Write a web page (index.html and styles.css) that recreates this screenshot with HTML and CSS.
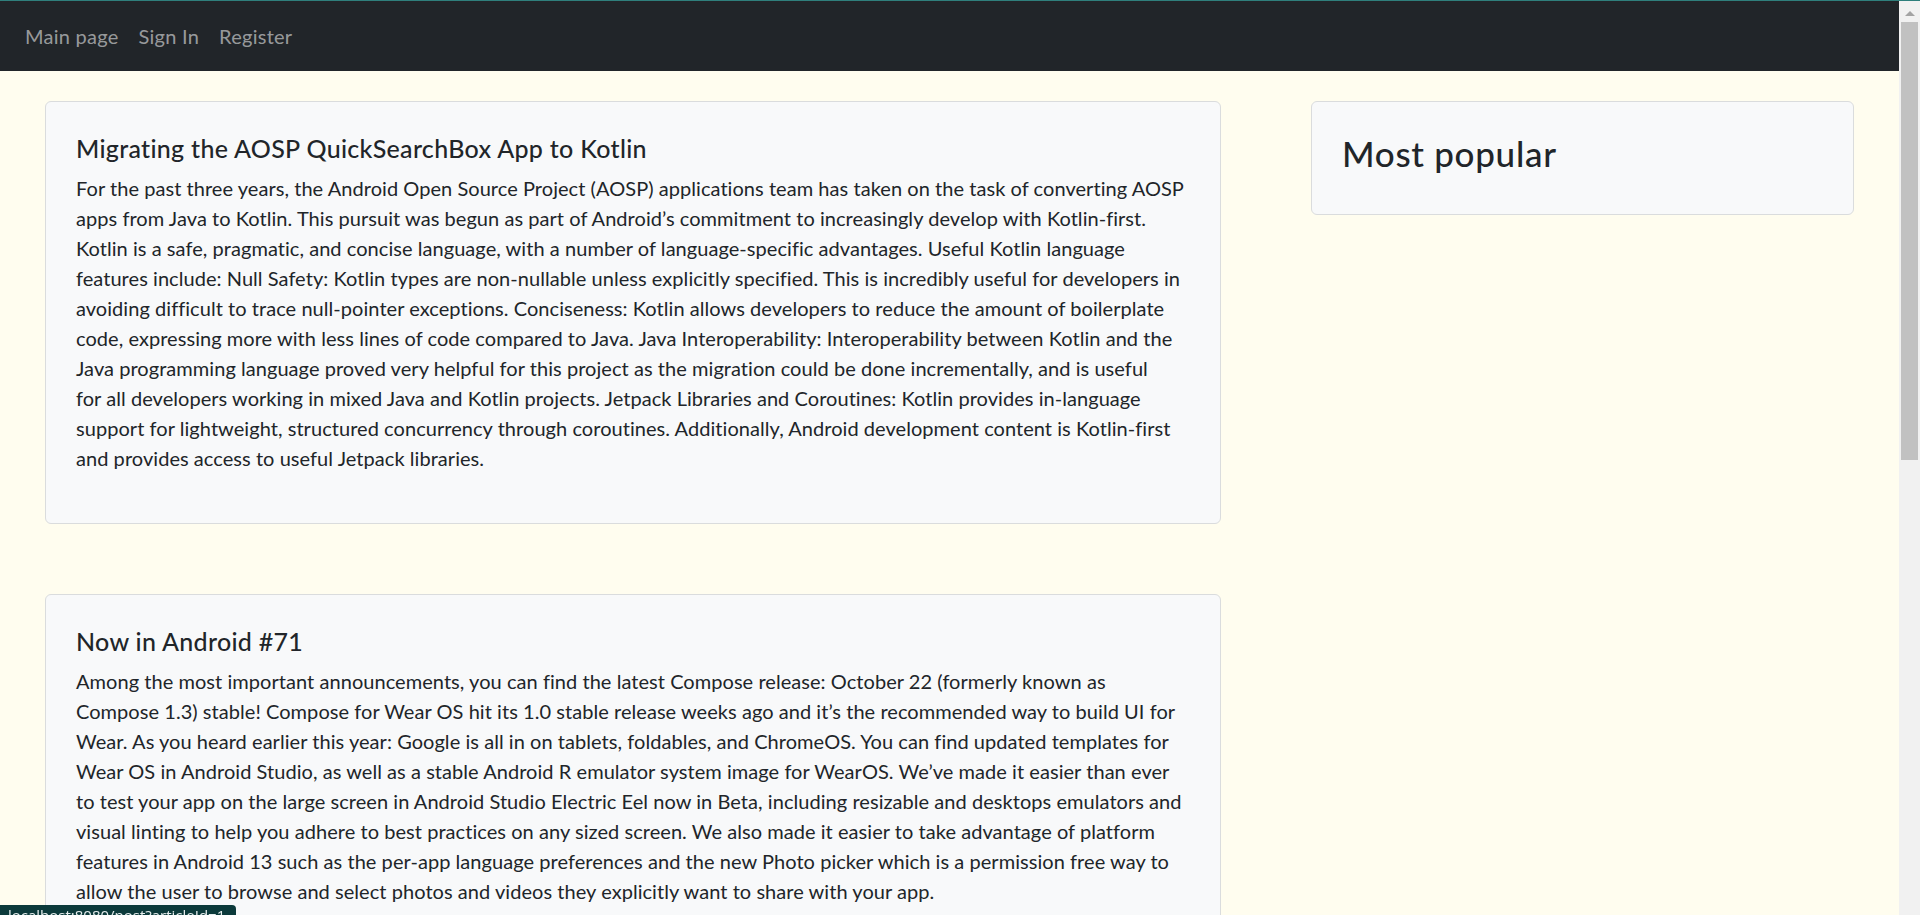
FILE: index.html
```html
<!DOCTYPE html>
<html lang="en">
<head>
<meta charset="utf-8">
<title>Blog</title>
<link rel="stylesheet" href="styles.css">
</head>
<body>
<div class="window">
  <div class="page">
    <nav class="navbar">
      <a class="nav-link" href="#">Main page</a>
      <a class="nav-link" href="#">Sign In</a>
      <a class="nav-link" href="#">Register</a>
    </nav>
    <div class="row">
      <div class="col-main">
        <article class="card">
          <h5 class="card-title">Migrating the AOSP QuickSearchBox App to Kotlin</h5>
          <p class="card-text">For the past three years, the Android Open Source Project (AOSP) applications team has taken on the task of converting AOSP<br>apps from Java to Kotlin. This pursuit was begun as part of Android’s commitment to increasingly develop with Kotlin-first.<br>Kotlin is a safe, pragmatic, and concise language, with a number of language-specific advantages. Useful Kotlin language<br>features include: Null Safety: Kotlin types are non-nullable unless explicitly specified. This is incredibly useful for developers in<br>avoiding difficult to trace null-pointer exceptions. Conciseness: Kotlin allows developers to reduce the amount of boilerplate<br>code, expressing more with less lines of code compared to Java. Java Interoperability: Interoperability between Kotlin and the<br>Java programming language proved very helpful for this project as the migration could be done incrementally, and is useful<br>for all developers working in mixed Java and Kotlin projects. Jetpack Libraries and Coroutines: Kotlin provides in-language<br>support for lightweight, structured concurrency through coroutines. Additionally, Android development content is Kotlin-first<br>and provides access to useful Jetpack libraries.</p>
        </article>
        <article class="card">
          <h5 class="card-title">Now in Android #71</h5>
          <p class="card-text">Among the most important announcements, you can find the latest Compose release: October 22 (formerly known as<br>Compose 1.3) stable! Compose for Wear OS hit its 1.0 stable release weeks ago and it’s the recommended way to build UI for<br>Wear. As you heard earlier this year: Google is all in on tablets, foldables, and ChromeOS. You can find updated templates for<br>Wear OS in Android Studio, as well as a stable Android R emulator system image for WearOS. We’ve made it easier than ever<br>to test your app on the large screen in Android Studio Electric Eel now in Beta, including resizable and desktops emulators and<br>visual linting to help you adhere to best practices on any sized screen. We also made it easier to take advantage of platform<br>features in Android 13 such as the per-app language preferences and the new Photo picker which is a permission free way to<br>allow the user to browse and select photos and videos they explicitly want to share with your app.</p>
        </article>
      </div>
      <aside class="col-side">
        <div class="card card-side">
          <h3 class="side-title">Most popular</h3>
        </div>
      </aside>
    </div>
  </div>
  <div class="scrollbar">
    <div class="scroll-btn"><span class="arrow-up"></span></div>
    <div class="scroll-thumb"></div>
  </div>
</div>
<div class="status">localhost:8080/post?articleId=1</div>
</body>
</html>
```

FILE: styles.css
```css
html, body {
  margin: 0;
  padding: 0;
  height: 100%;
  overflow: hidden;
}

body {
  box-sizing: border-box;
  border-top: 1px solid #2f7f7c;
  background: #fffdef;
  color: #212529;
  font-family: Lato, "Open Sans", "Liberation Sans", sans-serif;
}

.window {
  display: flex;
  height: 914px;
}

.page {
  flex: 1;
  min-width: 0;
  overflow: hidden;
  background: #fffdef;
}

.navbar {
  display: flex;
  align-items: center;
  height: 70px;
  padding: 0 15px;
  background: #212529;
}

.nav-link {
  padding: 10px;
  font-size: 20px;
  line-height: 30px;
  letter-spacing: 0.25px;
  color: rgba(255, 255, 255, 0.55);
  text-decoration: none;
}

.row {
  display: grid;
  grid-template-columns: 8fr 4fr;
}

.col-main,
.col-side {
  padding: 0 15px;
  min-width: 0;
}

.col-main {
  display: flex;
  flex-direction: column;
  gap: 10px;
}

.card {
  margin: 30px;
  padding: 30px;
  background: #f8f9fa;
  border: 1px solid #dadcdd;
  border-radius: 6px;
}

.card-title {
  margin: 0 0 10px;
  padding-top: 1px;
  font-size: 25px;
  line-height: 30px;
  font-weight: 500;
  letter-spacing: 0.3px;
}

.card-text {
  margin: 0 0 20px;
  font-size: 20px;
  line-height: 30px;
  letter-spacing: 0.05px;
  white-space: nowrap;
}

.side-title {
  margin: 0 0 10px;
  font-size: 35px;
  line-height: 42px;
  font-weight: 500;
  letter-spacing: 0.7px;
}

.scrollbar {
  width: 21px;
  flex: none;
  display: flex;
  flex-direction: column;
  align-items: center;
  background: #f1f1f1;
}

.scroll-btn {
  height: 21px;
  width: 21px;
  display: flex;
  justify-content: center;
  align-items: center;
}

.arrow-up {
  width: 0;
  height: 0;
  border-left: 5px solid transparent;
  border-right: 5px solid transparent;
  border-bottom: 5px solid #a3a3a3;
  margin-top: 3px;
}

.scroll-thumb {
  width: 17px;
  height: 438px;
  background: #c1c1c1;
}

.status {
  position: fixed;
  left: 0;
  bottom: -13px;
  width: 220px;
  height: 23px;
  padding: 0 8px;
  background: #0c3a3b;
  border-top-right-radius: 4px;
  color: #e6eeee;
  font-family: "Open Sans", "Liberation Sans", sans-serif;
  font-size: 15px;
  line-height: 20px;
  white-space: nowrap;
  overflow: hidden;
}
```
